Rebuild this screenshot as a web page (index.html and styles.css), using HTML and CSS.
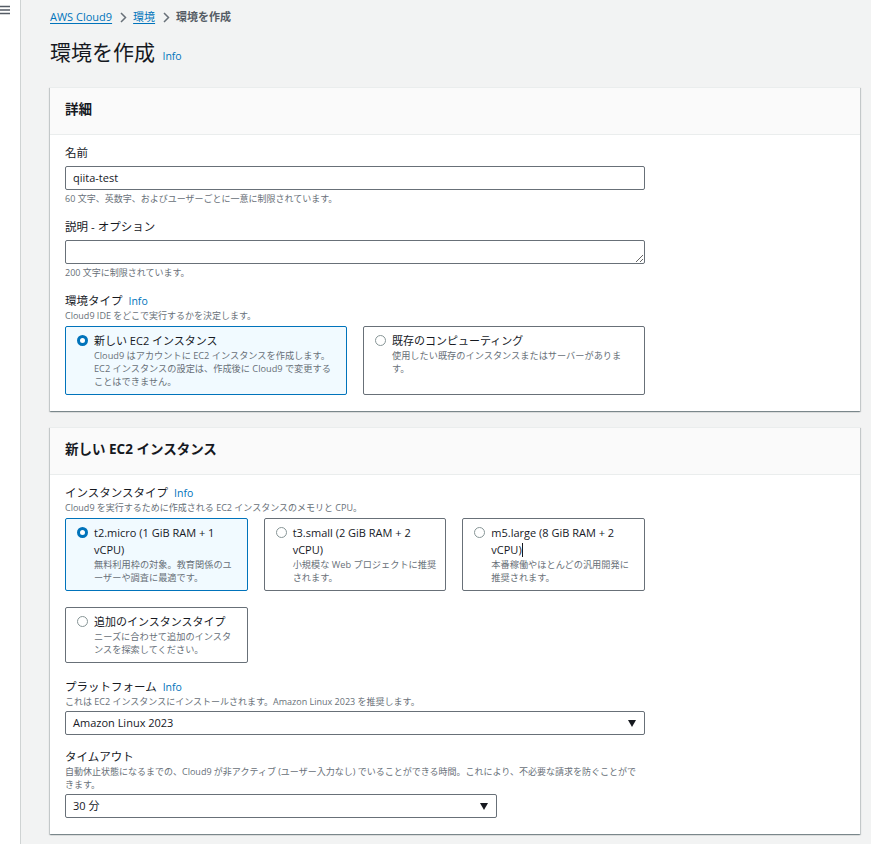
FILE: index.html
```html
<!DOCTYPE html>
<html lang="ja">
<head>
<meta charset="utf-8">
<title>環境を作成</title>
<link rel="stylesheet" href="styles.css">
</head>
<body>
<div class="app">
  <aside class="nav">
    <svg class="burger" width="12" height="12" viewBox="0 0 12 12"><path d="M-2 2.5H10M-2 6H10M-2 9.5H10" stroke="#545b64" stroke-width="1.5" fill="none"/></svg>
  </aside>
  <main class="main">
    <nav class="crumbs">
      <a class="crumb-link">AWS Cloud9</a>
      <svg class="chev" width="8" height="11" viewBox="0 0 8 11"><path d="M2 1L6.5 5.5L2 10" stroke="#687078" stroke-width="1.5" fill="none"/></svg>
      <a class="crumb-link">環境</a>
      <svg class="chev" width="8" height="11" viewBox="0 0 8 11"><path d="M2 1L6.5 5.5L2 10" stroke="#687078" stroke-width="1.5" fill="none"/></svg>
      <span class="crumb-current">環境を作成</span>
    </nav>
    <h1 class="title">環境を作成 <span class="title-info">Info</span></h1>

    <section class="card">
      <div class="card-head"><h2 class="card-title">詳細</h2></div>
      <div class="card-body">
        <div class="field">
          <div class="label">名前</div>
          <div class="input">qiita-test</div>
          <div class="hint">60 文字、英数字、およびユーザーごとに一意に制限されています。</div>
        </div>
        <div class="field">
          <div class="label">説明 - オプション</div>
          <textarea class="textarea"></textarea>
          <div class="hint">200 文字に制限されています。</div>
        </div>
        <div class="field">
          <div class="label label-nogap">環境タイプ <span class="info">Info</span></div>
          <div class="desc">Cloud9 IDE をどこで実行するかを決定します。</div>
          <div class="tiles tiles-2">
            <div class="tile tile-on">
              <span class="radio-wrap"><span class="radio radio-on"></span></span>
              <div class="tile-text">
                <div class="tile-title">新しい EC2 インスタンス</div>
                <div class="tile-desc">Cloud9 はアカウントに EC2 インスタンスを作成します。EC2 インスタンスの設定は、作成後に Cloud9 で変更することはできません。</div>
              </div>
            </div>
            <div class="tile">
              <span class="radio-wrap"><span class="radio"></span></span>
              <div class="tile-text">
                <div class="tile-title">既存のコンピューティング</div>
                <div class="tile-desc">使用したい既存のインスタンスまたはサーバーがあります。</div>
              </div>
            </div>
          </div>
        </div>
      </div>
    </section>

    <section class="card">
      <div class="card-head"><h2 class="card-title">新しい EC2 インスタンス</h2></div>
      <div class="card-body">
        <div class="field">
          <div class="label label-nogap">インスタンスタイプ <span class="info">Info</span></div>
          <div class="desc">Cloud9 を実行するために作成される EC2 インスタンスのメモリと CPU。</div>
          <div class="tiles tiles-3 tiles-spaced">
            <div class="tile tile-on">
              <span class="radio-wrap"><span class="radio radio-on"></span></span>
              <div class="tile-text">
                <div class="tile-title">t2.micro (1 GiB RAM + 1 vCPU)</div>
                <div class="tile-desc">無料利用枠の対象。教育関係のユ<br>ーザーや調査に最適です。</div>
              </div>
            </div>
            <div class="tile">
              <span class="radio-wrap"><span class="radio"></span></span>
              <div class="tile-text">
                <div class="tile-title">t3.small (2 GiB RAM + 2 vCPU)</div>
                <div class="tile-desc">小規模な Web プロジェクトに推奨<br>されます。</div>
              </div>
            </div>
            <div class="tile">
              <span class="radio-wrap"><span class="radio"></span></span>
              <div class="tile-text">
                <div class="tile-title">m5.large (8 GiB RAM + 2 vCPU)<span class="caret"></span></div>
                <div class="tile-desc">本番稼働やほとんどの汎用開発に<br>推奨されます。</div>
              </div>
            </div>
            <div class="tile">
              <span class="radio-wrap"><span class="radio"></span></span>
              <div class="tile-text">
                <div class="tile-title">追加のインスタンスタイプ</div>
                <div class="tile-desc">ニーズに合わせて追加のインスタ<br>ンスを探索してください。</div>
              </div>
            </div>
          </div>
        </div>
        <div class="field">
          <div class="label label-nogap">プラットフォーム <span class="info">Info</span></div>
          <div class="desc">これは EC2 インスタンスにインストールされます。Amazon Linux 2023 を推奨します。</div>
          <div class="select">
            <span>Amazon Linux 2023</span>
            <svg class="arrow" width="8" height="7" viewBox="0 0 8 7"><path d="M0 0H8L4 7Z" fill="#16191f"/></svg>
          </div>
        </div>
        <div class="field">
          <div class="label label-nogap">タイムアウト</div>
          <div class="desc desc-long">自動休止状態になるまでの、Cloud9 が非アクティブ (ユーザー入力なし) でいることができる時間。これにより、不必要な請求を防ぐことができます。</div>
          <div class="select select-short">
            <span>30 分</span>
            <svg class="arrow" width="8" height="7" viewBox="0 0 8 7"><path d="M0 0H8L4 7Z" fill="#16191f"/></svg>
          </div>
        </div>
      </div>
    </section>
  </main>
</div>
</body>
</html>
```

FILE: styles.css
```css
* { box-sizing: border-box; }
html, body {
  margin: 0;
  padding: 0;
  background: #f2f3f3;
  color: #16191f;
  font-family: "Open Sans", "Noto Sans CJK JP", sans-serif;
}
.app {
  display: flex;
  min-height: 844px;
}
.nav {
  width: 21px;
  flex: none;
  background: #ffffff;
  border-right: 1px solid #cfd3d3;
  overflow: hidden;
}
.burger {
  display: block;
  margin-top: 4px;
}
.main {
  flex: 1;
  padding: 9px 11px 10px 29px;
}
.crumbs {
  display: flex;
  align-items: center;
  height: 16px;
  font-size: 11px;
  line-height: 16px;
}
.crumb-link {
  color: #0073bb;
  text-decoration: underline;
  text-underline-offset: 2px;
}
.chev {
  margin: 0 6px 0 7px;
}
.crumb-current {
  color: #545b64;
  font-weight: 600;
}
.title {
  margin: 13px 0 0 0;
  font-size: 21px;
  line-height: 28px;
  font-weight: 400;
  height: 28px;
}
.title-info {
  font-size: 10.5px;
  color: #0073bb;
  font-weight: 400;
  margin-left: 2px;
}
.card {
  margin-top: 21px;
  background: #ffffff;
  border-top: 1px solid #eaeded;
  box-shadow: 0 1px 1px 0 rgba(0, 28, 36, 0.3), 1px 1px 1px 0 rgba(0, 28, 36, 0.15), -1px 1px 1px 0 rgba(0, 28, 36, 0.15);
}
.card + .card { margin-top: 16px; }
.card-head {
  height: 47px;
  background: #fafafa;
  border-bottom: 1px solid #eaeded;
  display: flex;
  align-items: center;
  padding: 0 15px 5px 15px;
}
.card-title {
  margin: 0;
  font-size: 13.5px;
  font-weight: 700;
  line-height: 18px;
}
.card-body {
  padding: 10px 15px 16px 15px;
  display: flex;
  flex-direction: column;
  gap: 14px;
}
.field {
  width: 580px;
  display: flex;
  flex-direction: column;
}
.label {
  font-size: 11.5px;
  line-height: 16px;
  margin-bottom: 5px;
}
.label-nogap { margin-bottom: 0; }
.info {
  color: #0073bb;
  font-size: 10.5px;
  margin-left: 3px;
}
.input, .textarea, .select {
  width: 580px;
  height: 24px;
  border: 1px solid #687078;
  border-radius: 2px;
  background: #ffffff;
  font-family: inherit;
  font-size: 11px;
  line-height: 22px;
  padding: 0 7px;
  color: #16191f;
}
.textarea {
  display: block;
  resize: vertical;
  margin: 0;
}
.hint {
  font-size: 9px;
  line-height: 13px;
  color: #687078;
  margin-top: 2px;
}
.desc {
  font-size: 9px;
  line-height: 13px;
  color: #687078;
  margin-bottom: 3px;
}
.desc-long {
  padding-right: 5px;
}
.tiles {
  display: grid;
  gap: 16px;
  margin-top: 1px;
}
.tiles-spaced { margin-bottom: 2px; }
.tiles-2 { grid-template-columns: 1fr 1fr; }
.tiles-3 { grid-template-columns: 1fr 1fr 1fr; }
.tile {
  display: flex;
  align-items: flex-start;
  border: 1px solid #687078;
  border-radius: 2px;
  padding: 5px 10px 6px 11px;
  background: #ffffff;
}
.tiles-3 .tile { padding-right: 4px; }
.tile-on {
  border-color: #0073bb;
  background: #f1faff;
}
.radio-wrap {
  flex: none;
  height: 17px;
  display: flex;
  align-items: center;
  margin-right: 6px;
}
.radio {
  width: 11px;
  height: 11px;
  border-radius: 50%;
  border: 1px solid #879596;
  background: #ffffff;
}
.radio-on {
  border: 3.5px solid #0073bb;
}
.tile-text {
  flex: 1;
  min-width: 0;
}
.tile-title {
  font-size: 11px;
  line-height: 17px;
}
.tile-desc {
  font-size: 9.2px;
  line-height: 13px;
  color: #687078;
}
.caret {
  display: inline-block;
  width: 1px;
  height: 14px;
  background: #16191f;
  vertical-align: -3px;
}
.select {
  display: flex;
  align-items: center;
  justify-content: space-between;
  padding-right: 8px;
}
.select-short { width: 432px; }
.arrow { flex: none; }
```
